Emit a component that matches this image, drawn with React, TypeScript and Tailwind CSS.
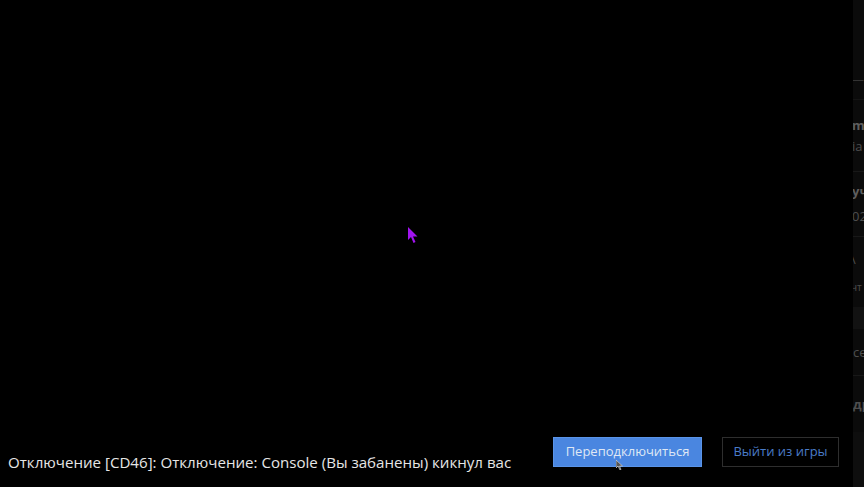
import React from "react";

const font = { fontFamily: '"Open Sans", "Noto Sans", sans-serif' };

const SidePanel: React.FC = () => (
  <div className="w-[11px] h-full bg-[#0b0b0b] overflow-hidden flex flex-col text-[#4e4e4e] text-[13px] leading-none">
    <div className="h-[60px] shrink-0" />
    <div className="h-[40px] border-b border-[#141414] flex items-center text-[#333] -ml-[2px]">—</div>
    <div className="h-[72px] border-b border-[#181818] flex flex-col justify-center gap-2 -ml-[1px]">
      <span className="font-bold text-[#5e5e5e]">m</span>
      <span>ia</span>
    </div>
    <div className="h-[65px] border-b border-[#181818] flex flex-col justify-center gap-3 -ml-[1px]">
      <span className="font-bold text-[#5e5e5e]">уч</span>
      <span>02</span>
    </div>
    <div className="h-[70px] flex flex-col justify-center gap-4 -ml-[2px]">
      <span>\</span>
      <span className="text-[10px]">чт</span>
    </div>
    <div className="h-[22px] bg-[#121212]" />
    <div className="h-[47px] border-b border-[#181818] flex items-center">
      <span>се</span>
    </div>
    <div className="h-[56px] flex items-center">
      <span className="font-bold">др</span>
    </div>
    <div className="flex-1 bg-[#0e0e0e]" />
  </div>
);

const App: React.FC = () => {
  return (
    <div className="relative w-[864px] h-[487px] bg-black flex overflow-hidden" style={font}>
      <div className="flex-1 flex flex-col justify-end">
        <div className="flex items-end justify-between pl-[8px] pr-[14px] pb-[15px]">
          <span className="text-[15.1px] leading-[20px] text-[#e6e6e6]">
            Отключение [CD46]: Отключение: Console (Вы забанены) кикнул вас
          </span>
          <div className="flex gap-[20px] mb-[5px]">
            <button className="relative w-[149px] h-[30px] bg-[#4a86e0] text-[#dfe8f5] text-[13px] border border-[#5a94e8]">
              Переподключиться
              <svg className="absolute left-[62px] top-[22px]" width="8" height="10" viewBox="0 0 8 10">
                <path d="M0 0 L0 8 L2 6 L4 10 L5 9.5 L3.5 6 L6.5 6 Z" fill="#555" stroke="#ddd" strokeWidth="0.6" />
              </svg>
            </button>
            <button className="w-[117px] h-[30px] bg-black border border-[#2e2e2e] text-[#4a7cc8] text-[13px]">
              Выйти из игры
            </button>
          </div>
        </div>
      </div>
      <SidePanel />
      <svg className="absolute left-[408px] top-[227px]" width="11" height="17" viewBox="0 0 11 17">
        <path d="M0 0 L0 13 L3 10 L5.5 16 L7.5 15 L5 9.5 L9.5 9.5 Z" fill="#a214f0" />
      </svg>
    </div>
  );
};

export default App;
